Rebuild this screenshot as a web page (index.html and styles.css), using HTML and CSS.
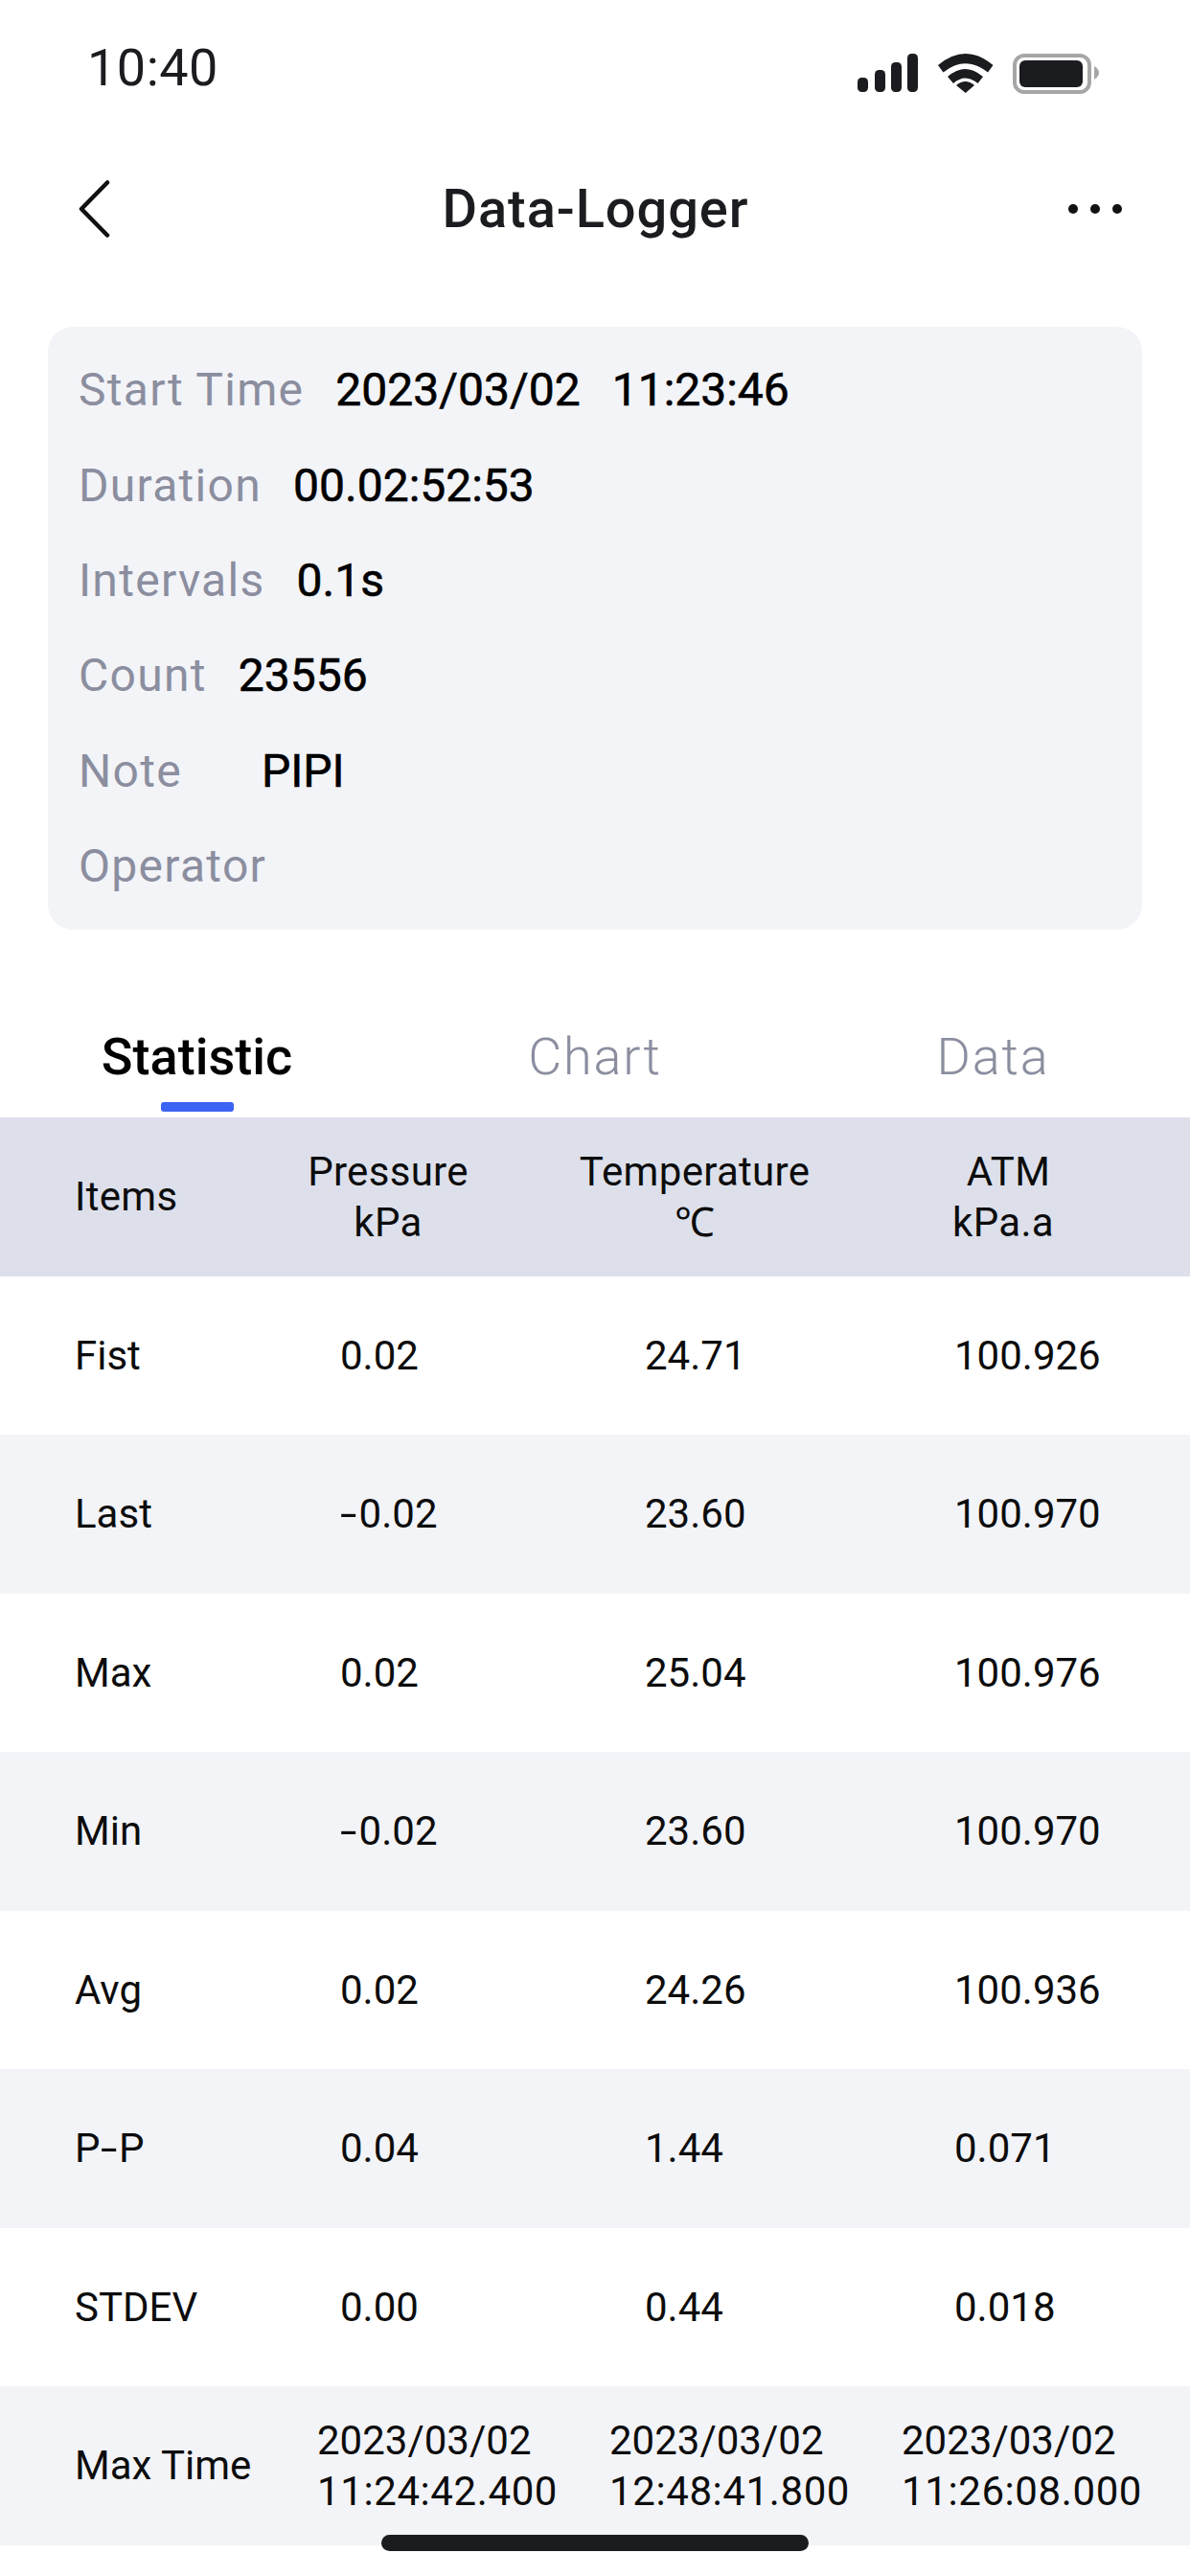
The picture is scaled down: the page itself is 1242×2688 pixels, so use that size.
FILE: index.html
```html
<!DOCTYPE html>
<html lang="en">
<head>
<meta charset="utf-8">
<title>Data-Logger</title>
<link rel="stylesheet" href="styles.css">
</head>
<body>
<div class="screen">
  <header class="status">
    <span class="clock">10:40</span>
    <svg class="status-icons" viewBox="0 0 252 42" width="252" height="42">
      <rect x="0" y="25" width="11" height="15" rx="4.5" fill="#1b1c20"/>
      <rect x="18" y="17" width="11" height="23" rx="4.5" fill="#1b1c20"/>
      <rect x="35" y="9" width="11" height="31" rx="4.5" fill="#1b1c20"/>
      <rect x="52" y="0" width="11" height="40" rx="4.5" fill="#1b1c20"/>
      <path d="M84 12Q112.7-12 141.5 12L136 19.5Q112.7 1 89.5 19.5Z" fill="#1b1c20"/>
      <path d="M94 24Q112.7 8 131 24L125.5 31Q112.7 20 100 31Z" fill="#1b1c20"/>
      <path d="M103 33Q112.7 25 122 33L112.7 41Z" fill="#1b1c20"/>
      <rect x="164" y="2" width="78" height="38" rx="10" fill="none" stroke="#a6a6a6" stroke-width="4"/>
      <rect x="169" y="7" width="66" height="28" rx="6" fill="#1b1c20"/>
      <path d="M247 13Q252 16 252 20Q252 24 247 27Z" fill="#a6a6a6"/>
    </svg>
  </header>

  <nav class="nav">
    <svg class="nav-icon" viewBox="0 0 36 60" width="36" height="60">
      <path d="M31 2.500L4 30L31 57.500" fill="none" stroke="#111" stroke-width="4.500" stroke-linecap="round" stroke-linejoin="round"/>
    </svg>
    <h1 class="title">Data-Logger</h1>
    <svg class="nav-icon nav-more" viewBox="0 0 56 10" width="56" height="10">
      <circle cx="5" cy="5" r="5" fill="#111"/>
      <circle cx="28" cy="5" r="5" fill="#111"/>
      <circle cx="51" cy="5" r="5" fill="#111"/>
    </svg>
  </nav>

  <section class="card">
    <div class="info"><span class="label">Start Time</span><span class="value">2023/03/02<span class="time">11:23:46</span></span></div>
    <div class="info"><span class="label">Duration</span><span class="value">00.02:52:53</span></div>
    <div class="info"><span class="label">Intervals</span><span class="value">0.1s</span></div>
    <div class="info"><span class="label">Count</span><span class="value">23556</span></div>
    <div class="info"><span class="label">Note</span><span class="value value-note">PIPI</span></div>
    <div class="info"><span class="label">Operator</span></div>
  </section>

  <div class="tabs">
    <div class="tab tab-active">Statistic</div>
    <div class="tab">Chart</div>
    <div class="tab">Data</div>
  </div>

  <section class="table">
    <div class="row row-head">
      <div>Items</div>
      <div class="center">Pressure<br>kPa</div>
      <div class="center">Temperature<br>℃</div>
      <div class="center"><span class="atm">ATM</span><br>kPa.a</div>
    </div>
    <div class="row"><div>Fist</div><div>0.02</div><div>24.71</div><div>100.926</div></div>
    <div class="row alt"><div>Last</div><div><span class="dash">-</span>0.02</div><div>23.60</div><div>100.970</div></div>
    <div class="row"><div>Max</div><div>0.02</div><div>25.04</div><div>100.976</div></div>
    <div class="row alt"><div>Min</div><div><span class="dash">-</span>0.02</div><div>23.60</div><div>100.970</div></div>
    <div class="row"><div>Avg</div><div>0.02</div><div>24.26</div><div>100.936</div></div>
    <div class="row alt"><div>P<span class="dash">-</span>P</div><div>0.04</div><div>1.44</div><div>0.071</div></div>
    <div class="row"><div>STDEV</div><div>0.00</div><div>0.44</div><div>0.018</div></div>
    <div class="row row-time alt">
      <div>Max Time</div>
      <div>2023/03/02<br><span class="stamp">11:24:42.400</span></div>
      <div>2023/03/02<br><span class="stamp">12:48:41.800</span></div>
      <div>2023/03/02<br><span class="stamp">11:26:08.000</span></div>
    </div>
  </section>

  <div class="home-bar"></div>
</div>
</body>
</html>
```

FILE: styles.css
```css
* { box-sizing: border-box; }
html, body { margin: 0; padding: 0; background: #fff; }
body { font-family: Roboto, "Noto Sans", sans-serif; color: #111; }

.screen {
  position: relative;
  width: 1242px;
  height: 2688px;
  overflow: hidden;
  background: #fff;
}

.status {
  height: 164px;
  padding: 36px 95px 0 91px;
  display: flex;
  justify-content: space-between;
  align-items: flex-start;
}
.clock { font-size: 54px; line-height: 70px; letter-spacing: 0.5px; color: #1b1c20; }
.status-icons { margin-top: 20px; display: block; }

.nav {
  height: 108px;
  padding: 0 71px 0 81px;
  display: flex;
  justify-content: space-between;
  align-items: center;
}
.nav-icon { display: block; flex: none; }
.title {
  margin: 0 0 0 11px;
  font-size: 56px;
  line-height: 70px;
  font-weight: 500;
  letter-spacing: 0.9px;
  color: #1b1c20;
}

.card {
  margin: 69px 50px 0;
  height: 629px;
  padding: 16px 32px 17px;
  background: #f3f4f8;
  border-radius: 26px;
}
.info {
  height: 99.400px;
  display: flex;
  align-items: center;
  gap: 33px;
  font-size: 48px;
}
.label { color: #8b8e9f; letter-spacing: 1.3px; }
.value { color: #000; -webkit-text-stroke: 0.6px #000; }
.value-note { margin-left: 50px; }
.time { margin-left: 33px; }

.tabs {
  margin-top: 80px;
  height: 116px;
  display: grid;
  grid-template-columns: repeat(3, 415.500px);
  justify-content: center;
}
.tab {
  position: relative;
  padding-top: 18px;
  text-align: center;
  font-size: 54px;
  font-weight: 300;
  letter-spacing: 1.800px;
  line-height: 70px;
  color: #8b8e9f;
}
.tab-active { font-weight: 500; letter-spacing: 0; color: #000; }
.tab-active::after {
  content: "";
  position: absolute;
  left: 50%;
  bottom: 6px;
  width: 76px;
  height: 10px;
  margin-left: -38px;
  border-radius: 3px;
  background: #3d63f5;
}

.table { display: block; }
.row {
  height: 165.500px;
  padding-left: 78px;
  display: grid;
  grid-template-columns: 277px 318px 323px 1fr;
  align-items: center;
  font-size: 42px;
  line-height: 53px;
  color: #0c0c0c;
}
.alt { background: #f3f4f8; }
.row-head {
  background: #dde0eb;
  grid-template-columns: 167px 320px 320px 324px;
  letter-spacing: 0.3px;
}
.row-time { grid-template-columns: 253px 305px 305px 1fr; }
.center { text-align: center; }
.atm { margin-left: 11px; }
.stamp { letter-spacing: 0.6px; }
.dash {
  display: inline-block;
  margin-right: 8px;
  transform: scaleX(1.5);
  transform-origin: left center;
}

.home-bar {
  position: absolute;
  left: 398px;
  bottom: 26px;
  width: 446px;
  height: 17px;
  border-radius: 9px;
  background: #1b1c20;
}
```
